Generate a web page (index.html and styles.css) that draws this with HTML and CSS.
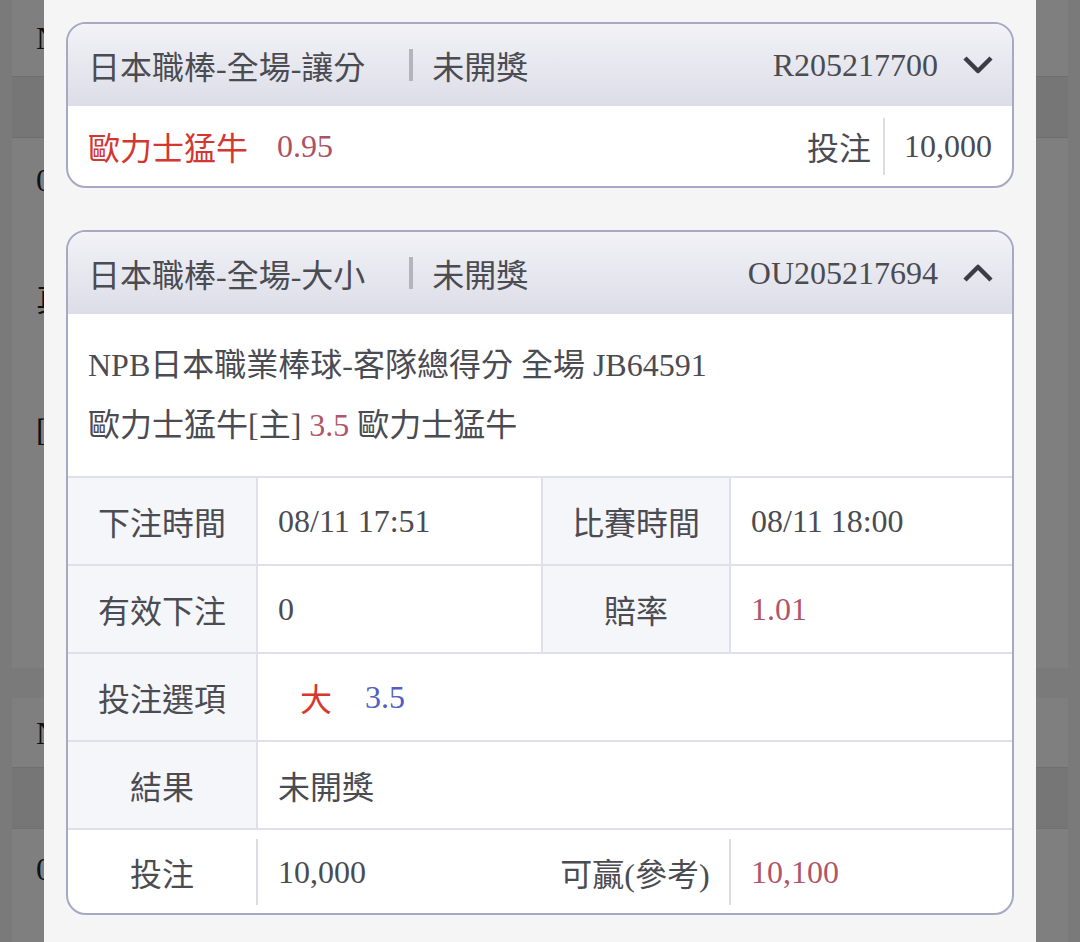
FILE: index.html
```html
<!DOCTYPE html>
<html lang="zh-Hant">
  <head>
    <meta charset="UTF-8" />
    <meta name="viewport" content="width=device-width, initial-scale=1.0" />
    <title>注單明細</title>
    <link rel="stylesheet" href="styles.css">
  </head>
  <body>
    <!-- bet list behind the detail sheet -->
    <div class="page">
      <div class="list-row">N</div>
      <div class="list-band"></div>
      <div class="list-card">
        <p>0</p>
        <p>真</p>
        <p>[</p>
      </div>
      <div class="list-gap"></div>
      <div class="list-row short">N</div>
      <div class="list-band"></div>
      <div class="list-card last">
        <p>0</p>
      </div>
    </div>

    <div class="mask"></div>

    <div class="sheet">
      <div class="bet-card">
        <div class="bet-head">
          <span class="play">日本職棒-全場-讓分</span>
          <span class="state">未開獎</span>
          <span class="bet-no">R205217700</span>
          <svg class="arrow" viewBox="0 0 32 20" aria-hidden="true">
            <polyline points="3,3 16,16 29,3" />
          </svg>
        </div>
        <div class="bet-sum">
          <span class="team">歐力士猛牛</span>
          <span class="odds">0.95</span>
          <span class="stake-label">投注</span>
          <span class="stake">10,000</span>
        </div>
      </div>

      <div class="bet-card">
        <div class="bet-head">
          <span class="play">日本職棒-全場-大小</span>
          <span class="state">未開獎</span>
          <span class="bet-no">OU205217694</span>
          <svg class="arrow" viewBox="0 0 32 20" aria-hidden="true">
            <polyline points="3,17 16,4 29,17" />
          </svg>
        </div>
        <div class="bet-info">
          <p>NPB日本職業棒球-客隊總得分 全場 JB64591</p>
          <p>歐力士猛牛[主] <span class="red-num">3.5</span> 歐力士猛牛</p>
        </div>
        <div class="bet-grid">
          <div class="cell label">下注時間</div>
          <div class="cell">08/11 17:51</div>
          <div class="cell label">比賽時間</div>
          <div class="cell">08/11 18:00</div>

          <div class="cell label">有效下注</div>
          <div class="cell">0</div>
          <div class="cell label">賠率</div>
          <div class="cell red-num">1.01</div>

          <div class="cell label">投注選項</div>
          <div class="cell wide">
            <span class="pick">大</span>
            <span class="line">3.5</span>
          </div>

          <div class="cell label">結果</div>
          <div class="cell wide">未開獎</div>
        </div>
        <div class="bet-foot">
          <div class="foot-label">投注</div>
          <div class="foot-value">10,000</div>
          <div class="foot-label">可贏(參考)</div>
          <div class="foot-value red-num">10,100</div>
        </div>
      </div>
    </div>
  </body>
</html>
```

FILE: styles.css
```css
* {
  box-sizing: border-box;
}

body {
  margin: 0;
  background: #f4f4f4;
  font-family: "Liberation Serif", "Noto Sans CJK TC", serif;
  font-size: 32px;
  color: #4b4b52;
  overflow: hidden;
}

p {
  margin: 0;
}

/* list underneath */
.page {
  padding: 0 12px;
  color: #222;
}

.list-row {
  height: 77px;
  line-height: 77px;
  padding-left: 24px;
  background: #fff;
  border-bottom: 1px solid #dcdcdc;
}

.list-row.short {
  height: 70px;
  line-height: 70px;
}

.list-band {
  height: 61px;
  background: #ededed;
  border-bottom: 1px solid #dcdcdc;
}

.list-card {
  height: 530px;
  padding: 24px 0 0 24px;
  background: #fff;
}

.list-card p {
  height: 112px;
}

.list-card p:nth-child(3) {
  margin-top: 26px;
}

.list-card.last {
  height: 120px;
  padding-top: 22px;
}

.list-gap {
  height: 30px;
}

.mask {
  position: fixed;
  inset: 0;
  background: rgba(0, 0, 0, 0.5);
}

/* detail sheet */
.sheet {
  position: fixed;
  top: 0;
  bottom: 0;
  left: 44px;
  width: 992px;
  padding: 22px 22px 0;
  background: #f5f5f5;
}

.bet-card {
  background: #fff;
  border: 2px solid #a6a9c3;
  border-radius: 20px;
  overflow: hidden;
}

.bet-card + .bet-card {
  margin-top: 42px;
}

.bet-head {
  display: flex;
  align-items: center;
  height: 82px;
  padding: 0 18px 0 20px;
  background: linear-gradient(#f2f2f7, #dcdde7);
}

.state {
  display: flex;
  align-items: center;
  margin-left: 44px;
}

.state::before {
  content: "";
  width: 4px;
  height: 32px;
  margin-right: 19px;
  background: #b4b4bc;
}

.bet-no {
  margin-left: auto;
}

.arrow {
  width: 32px;
  height: 20px;
  margin-left: 24px;
  fill: none;
  stroke: #3c3c44;
  stroke-width: 4.5;
  stroke-linejoin: round;
}

.bet-sum {
  display: flex;
  align-items: center;
  height: 80px;
  padding: 0 20px;
}

.team {
  color: #d3372f;
}

.odds {
  margin-left: 29px;
  color: #ad5264;
}

.stake-label {
  margin-left: auto;
}

.stake {
  margin-left: 12px;
  padding-left: 19px;
  line-height: 57px;
  border-left: 2px solid #dcdce4;
}

.bet-info {
  padding: 21px 20px;
  line-height: 60px;
}

.red-num {
  color: #b0566a;
}

.bet-grid {
  display: grid;
  grid-template-columns: 188px 283px 186px 1fr;
  gap: 2px;
  background: #dfe0ea;
  border-top: 2px solid #dfe0ea;
  border-bottom: 2px solid #dfe0ea;
}

.cell {
  display: flex;
  align-items: center;
  height: 86px;
  padding-left: 20px;
  background: #fff;
}

.cell.label {
  justify-content: center;
  padding: 0;
  background: #f5f6fa;
}

.cell.wide {
  grid-column: span 3;
}

.pick {
  margin-left: 22px;
  color: #d8382c;
}

.line {
  margin-left: 33px;
  color: #5060c0;
}

.bet-foot {
  display: grid;
  grid-template-columns: 188px 285px 188px 1fr;
  align-items: center;
  height: 83px;
}

.foot-label {
  text-align: center;
}

.foot-value {
  height: 66px;
  line-height: 66px;
  padding-left: 20px;
  border-left: 2px solid #dcdce4;
}
```
